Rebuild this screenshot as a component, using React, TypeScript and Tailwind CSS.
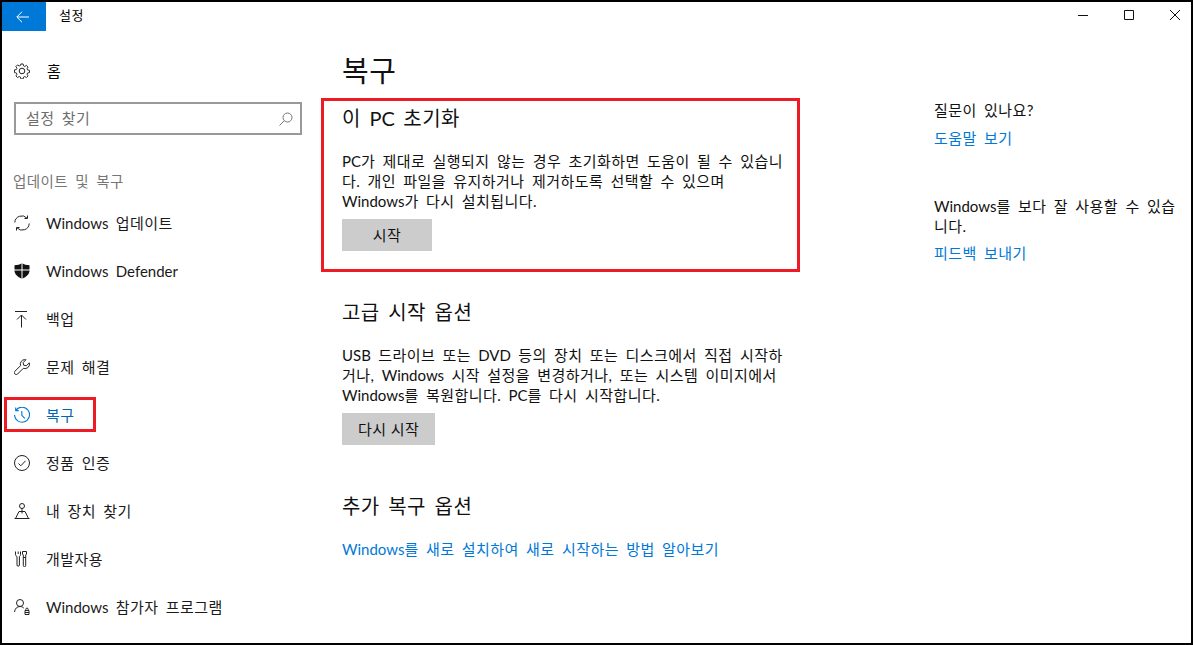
import type { ReactNode } from "react";

const FONT = "font-['Lato','Noto_Sans_CJK_KR',sans-serif] tracking-[0.45px] [word-spacing:3px]";

// Hangul needs extra tracking to match the reference, Latin words do not
function Txt({ children }: { children: string }) {
  return (
    <>
      {children.split(/([A-Za-z]+)/).map((part, i) =>
        i % 2 === 1 ? <span key={i} className="tracking-normal">{part}</span> : part
      )}
    </>
  );
}

function GearIcon() {
  return (
    <svg width="16" height="16" viewBox="0 0 16 16" fill="none" stroke="#222" strokeWidth="1">
      <circle cx="8" cy="8" r="2.8" />
      <path d="M6.8.6h2.4l.4 2 1.3.6 1.8-1.1 1.7 1.7-1.1 1.8.6 1.3 2 .4v2.4l-2 .4-.6 1.3 1.1 1.800-1.7 1.7-1.8-1.1-1.3.6-.4 2H6.800l-.4-2-1.3-.6-1.8 1.1-1.7-1.7 1.1-1.8-.6-1.3-2-.4V6.800l2-.4.6-1.3-1.1-1.8 1.7-1.7 1.8 1.1 1.3-.6z" transform="translate(.4 .4) scale(.95)" />
    </svg>
  );
}

function SyncIcon() {
  return (
    <svg width="16" height="16" viewBox="0 0 16 16" fill="none" stroke="#222" strokeWidth="1">
      <path d="M.8 7.500A7 7 0 0 1 13 3.200M15.200 8.500A7 7 0 0 1 3 12.800" />
      <path d="M13.500.5v3h-3M2.500 15.500v-3h3" />
    </svg>
  );
}

function ShieldIcon() {
  return (
    <svg width="16" height="16" viewBox="0 0 16 16">
      <path d="M8 .3c1.800 1.300 4.600 2 7.500 2v5.200c0 3.600-3 6.400-7.500 8.200C3.500 13.900.5 11.100.5 7.500V2.300c2.900 0 5.700-.7 7.500-2z" fill="#111" />
      <path d="M7.500 0h1v16h-1zM0 6.500h16v1H0z" fill="#fff" />
    </svg>
  );
}

function BackupIcon() {
  return (
    <svg width="16" height="17" viewBox="0 0 16 17" fill="none" stroke="#222" strokeWidth="1">
      <path d="M1 .5h12M7.500 16.500V4M3 8.500 7.500 4 12 8.500" />
    </svg>
  );
}

function WrenchIcon() {
  return (
    <svg width="16" height="16" viewBox="0 0 16 16" fill="none" stroke="#222" strokeWidth="1">
      <path d="M10.800.6a4.500 4.500 0 0 0-4.200 6L.9 12.300a1.900 1.900 0 0 0 0 2.700c.8.800 2 .8 2.700 0l5.700-5.700a4.500 4.500 0 0 0 6-5.500l-3 3-2.600-.6-.6-2.600 2.900-2.900a4.500 4.500 0 0 0-1.200-.1z" />
    </svg>
  );
}

function HistoryIcon() {
  return (
    <svg width="16" height="16" viewBox="0 0 16 16" fill="none" stroke="#0078d7" strokeWidth="1.100">
      <path d="M2 3.200A7.500 7.500 0 1 1 .5 8" />
      <path d="M1.700.6v3h3M7.800 4v4.300l3 3" />
    </svg>
  );
}

function CheckCircleIcon() {
  return (
    <svg width="16" height="16" viewBox="0 0 16 16" fill="none" stroke="#222" strokeWidth="1">
      <circle cx="8" cy="8" r="7.500" />
      <path d="m4.500 8.500 2.300 2.300 4.700-5" />
    </svg>
  );
}

function FindDeviceIcon() {
  return (
    <svg width="16" height="16" viewBox="0 0 16 16" fill="none" stroke="#222" strokeWidth="1">
      <circle cx="8" cy="3" r="2.500" />
      <path d="M8 5.500v5M5 8.500h6l3.500 7H1.500zM.5 15.500h15" />
    </svg>
  );
}

function DevToolsIcon() {
  return (
    <svg width="14" height="16" viewBox="0 0 14 16" fill="none" stroke="#222" strokeWidth="1">
      <path d="M1.500.5v3c0 1 .5 1.500 1.500 2v8.500a1.200 1.200 0 0 0 2.400 0V5.500c.8-.5 1.100-1 1.100-2v-3M4.200.5v2.500" />
      <path d="M8.500.5h4v2.500l-.8 1v2.500h-2.400V4l-.8-1zM9.300 6.500h2.400v8a1.200 1.200 0 0 1-2.400 0z" />
    </svg>
  );
}

function InsiderIcon() {
  return (
    <svg width="16" height="16" viewBox="0 0 16 16" fill="none" stroke="#222" strokeWidth="1">
      <circle cx="6" cy="4" r="3.500" />
      <path d="M.5 13c.3-3.300 2.500-5.500 5.500-5.500 1.600 0 2.900.6 3.800 1.600" />
      <path d="M11 11.500h4v4h-4zM11.800 11.500v-1.200a1.200 1.200 0 0 1 2.400 0v1.200M11 13.500h4" />
    </svg>
  );
}

const NAV_ITEMS: { label: string; icon: ReactNode; active?: boolean }[] = [
  { label: "Windows 업데이트", icon: <SyncIcon /> },
  { label: "Windows Defender", icon: <ShieldIcon /> },
  { label: "백업", icon: <BackupIcon /> },
  { label: "문제 해결", icon: <WrenchIcon /> },
  { label: "복구", icon: <HistoryIcon />, active: true },
  { label: "정품 인증", icon: <CheckCircleIcon /> },
  { label: "내 장치 찾기", icon: <FindDeviceIcon /> },
  { label: "개발자용", icon: <DevToolsIcon /> },
  { label: "Windows 참가자 프로그램", icon: <InsiderIcon /> },
];

function Sidebar() {
  return (
    <aside className="w-[320px] shrink-0">
      <div className="mt-[14px] flex h-[48px] items-center pl-[12px] pt-[4px] text-[15px] text-black">
        <span className="flex w-[33px] justify-start"><GearIcon /></span>
        <span>홈</span>
      </div>
      <div className="ml-[12px] mt-[9px] flex h-[33px] w-[288px] items-center justify-between border-2 border-[#999999] pl-[10px] pr-[7px] text-[15px] text-[#6d6d6d]">
        <span>설정 찾기</span>
        <svg width="14" height="14" viewBox="0 0 14 14" fill="none" stroke="#777" strokeWidth="1">
          <circle cx="8.500" cy="5.500" r="4.500" />
          <path d="M5.200 8.800.5 13.500" />
        </svg>
      </div>
      <div className="ml-[11px] mt-[35px] h-[24px] text-[14.500px] leading-[24px] text-[#767676]">업데이트 및 복구</div>
      <nav className="mt-[5px]">
        {NAV_ITEMS.map((item) => (
          <div
            key={item.label}
            className={`flex h-[48px] items-center pl-[12px] text-[15px] ${item.active ? "text-[#0067b8]" : "text-[#1a1a1a]"}`}
          >
            <span className="flex w-[32px] shrink-0">{item.icon}</span>
            <span><Txt>{item.label}</Txt></span>
          </div>
        ))}
      </nav>
    </aside>
  );
}

function Section({ title, body, action }: { title: string; body: string[]; action: string }) {
  return (
    <section>
      <h2 className="h-[30px] text-[20px] leading-[30px] text-[#111]"><Txt>{title}</Txt></h2>
      <div className="mt-[18px] text-[15px] leading-[20px] text-[#111]">
        {body.map((line) => (
          <p key={line} className="whitespace-nowrap"><Txt>{line}</Txt></p>
        ))}
      </div>
      <button className="mt-[8px] block h-[32px] min-w-[90px] bg-[#cccccc] px-[16px] text-[15px] text-[#111]">{action}</button>
    </section>
  );
}

function MainPanel() {
  return (
    <main className="relative flex-1 pl-[20px]">
      <h1 className="mt-[18px] h-[44px] text-[29px] leading-[44px] text-[#111]">복구</h1>
      <div className="mt-[10px]">
        <Section
          title="이 PC 초기화"
          body={[
            "PC가 제대로 실행되지 않는 경우 초기화하면 도움이 될 수 있습니",
            "다. 개인 파일을 유지하거나 제거하도록 선택할 수 있으며",
            "Windows가 다시 설치됩니다.",
          ]}
          action="시작"
        />
      </div>
      <div className="mt-[46px]">
        <Section
          title="고급 시작 옵션"
          body={[
            "USB 드라이브 또는 DVD 등의 장치 또는 디스크에서 직접 시작하",
            "거나, Windows 시작 설정을 변경하거나, 또는 시스템 이미지에서",
            "Windows를 복원합니다. PC를 다시 시작합니다.",
          ]}
          action="다시 시작"
        />
      </div>
      <h2 className="mt-[46px] h-[30px] text-[20px] leading-[30px] text-[#111]">추가 복구 옵션</h2>
      <a className="mt-[18px] block text-[15px] leading-[20px] text-[#0078d7]"><Txt>Windows를 새로 설치하여 새로 시작하는 방법 알아보기</Txt></a>
    </main>
  );
}

function HelpPanel() {
  return (
    <aside className="w-[257px] shrink-0 overflow-hidden pt-[69px] text-[15px] leading-[20px] text-[#111]">
      <p>질문이 있나요?</p>
      <a className="mt-[8px] block text-[#0078d7]">도움말 보기</a>
      <p className="mt-[48px] whitespace-nowrap"><Txt>Windows를 보다 잘 사용할 수 있습</Txt></p>
      <p>니다.</p>
      <a className="mt-[7px] block text-[#0078d7]">피드백 보내기</a>
    </aside>
  );
}

export default function App() {
  return (
    <div className={`relative h-[645px] w-[1193px] overflow-hidden border-2 border-black bg-white ${FONT}`}>
      <header className="flex h-[29px] items-start">
        <div className="flex h-[29px] w-[44px] items-center justify-center bg-[#0078d7] pr-[4px]">
          <svg width="13" height="12" viewBox="0 0 13 12" fill="none" stroke="#fff" strokeWidth="1">
            <path d="M13 6H1M6 .8.800 6 6 11.200" />
          </svg>
        </div>
        <span className="ml-[13px] text-[13px] leading-[26px] text-black">설정</span>
        <div className="ml-auto flex h-[26px] items-center pr-[11px]">
          <svg className="mr-[36px]" width="10" height="10" viewBox="0 0 10 10" stroke="#111"><path d="M0 5.500h10" /></svg>
          <svg className="mr-[36px]" width="10" height="10" viewBox="0 0 10 10" fill="none" stroke="#111"><path d="M.5.500h9v9h-9z" /></svg>
          <svg width="10" height="10" viewBox="0 0 10 10" stroke="#111"><path d="m0 0 10 10M10 0 0 10" /></svg>
        </div>
      </header>
      <div className="flex">
        <Sidebar />
        <MainPanel />
        <HelpPanel />
      </div>
      {/* Red annotation boxes drawn over the screenshot */}
      <div className="absolute left-[2px] top-[395px] h-[35px] w-[92px] border-[3px] border-[#ed1c24]" />
      <div className="absolute left-[319px] top-[96px] h-[174px] w-[479px] border-[3px] border-[#ed1c24]" />
    </div>
  );
}
